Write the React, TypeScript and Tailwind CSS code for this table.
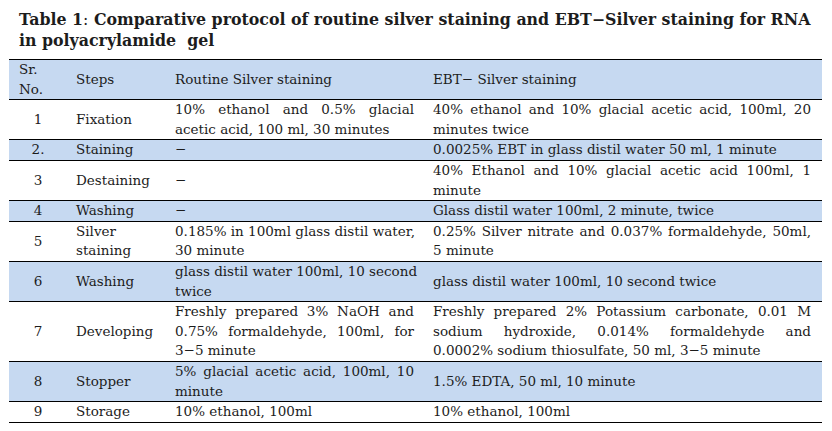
import React from 'react'

type Row = {
	no: string
	step: string[]
	routine: string[]
	ebt: string[]
	blue?: boolean
}

const rows: Row[] = [
	{ no: '1', step: ['Fixation'], routine: ['10%  ethanol  and 0.5% glacial', 'acetic  acid, 100 ml, 30 minutes'], ebt: ['40% ethanol and 10% glacial acetic acid, 100ml, 20', 'minutes twice'] },
	{ no: '2.', step: ['Staining'], routine: ['−'], ebt: ['0.0025% EBT in glass distil water 50 ml, 1 minute'], blue: true },
	{ no: '3', step: ['Destaining'], routine: ['−'], ebt: ['40% Ethanol and 10%  glacial acetic acid 100ml, 1', 'minute'] },
	{ no: '4', step: ['Washing'], routine: ['−'], ebt: ['Glass distil water 100ml,  2 minute, twice'], blue: true },
	{ no: '5', step: ['Silver', 'staining'], routine: ['0.185% in 100ml glass distil water,', '30 minute'], ebt: ['0.25% Silver nitrate and 0.037% formaldehyde, 50ml,', '5 minute'] },
	{ no: '6', step: ['Washing'], routine: ['glass distil water 100ml, 10 second', 'twice'], ebt: ['glass distil water 100ml, 10 second twice'], blue: true },
	{ no: '7', step: ['Developing'], routine: ['Freshly prepared 3% NaOH and', '0.75% formaldehyde, 100ml,  for', '3−5 minute'], ebt: ['Freshly prepared 2% Potassium carbonate, 0.01 M', 'sodium  hydroxide,  0.014%  formaldehyde  and', '0.0002% sodium thiosulfate, 50 ml, 3−5 minute'] },
	{ no: '8', step: ['Stopper'], routine: ['5% glacial acetic acid, 100ml, 10', 'minute'], ebt: ['1.5% EDTA, 50 ml, 10 minute'], blue: true },
	{ no: '9', step: ['Storage'], routine: ['10% ethanol, 100ml'], ebt: ['10% ethanol, 100ml'] },
]

// every line but the last is stretched to the column edge, like the Word table
function Lines({ lines }: { lines: string[] }) {
	return (
		<>
			{lines.map((l, i) => (
				<div key={i} className={i < lines.length - 1 ? 'whitespace-nowrap text-justify [text-align-last:justify]' : 'whitespace-nowrap'}>
					{l}
				</div>
			))}
		</>
	)
}

export default function App() {
	return (
		<div className="min-h-[431px] w-[832px] bg-white text-[#1c1c1c] [font-family:'DejaVu_Serif',serif]">
			<div className="pl-[19px] pt-[9px] text-[15.8px] font-bold leading-[21px]">
				<div>Table 1<span className="font-normal">:</span> Comparative protocol of routine silver staining and EBT−Silver staining for RNA</div>
				<div>in polyacrylamide&nbsp; gel</div>
			</div>
			<table className="mt-[8px] ml-[9px] w-[813px] table-fixed border-collapse text-[13.5px] leading-[19.6px]">
				<colgroup>
					<col className="w-[58px]" />
					<col className="w-[103px]" />
					<col className="w-[256px]" />
					<col className="w-[396px]" />
				</colgroup>
				<thead>
					<tr className="border-t border-b border-black bg-[#c6d9f1]">
						<th className="pl-[10px] text-left align-middle font-normal">
							<div>Sr.</div>
							<div>No.</div>
						</th>
						<th className="pl-[9px] text-left align-middle font-normal">Steps</th>
						<th className="pl-[5px] text-left align-middle font-normal">Routine Silver staining</th>
						<th className="pl-[7px] text-left align-middle font-normal">EBT− Silver staining</th>
					</tr>
				</thead>
				<tbody>
					{rows.map((r) => (
						<tr key={r.no} className={r.blue ? 'border-b border-black bg-[#c6d9f1]' : 'border-b border-black'}>
							<td className="text-center align-middle">{r.no}</td>
							<td className="pl-[9px] align-middle">
								<Lines lines={r.step} />
							</td>
							<td className="pl-[5px] pr-[12px] align-middle">
								<Lines lines={r.routine} />
							</td>
							<td className="pl-[7px] pr-[11px] align-middle">
								<Lines lines={r.ebt} />
							</td>
						</tr>
					))}
				</tbody>
			</table>
		</div>
	)
}
